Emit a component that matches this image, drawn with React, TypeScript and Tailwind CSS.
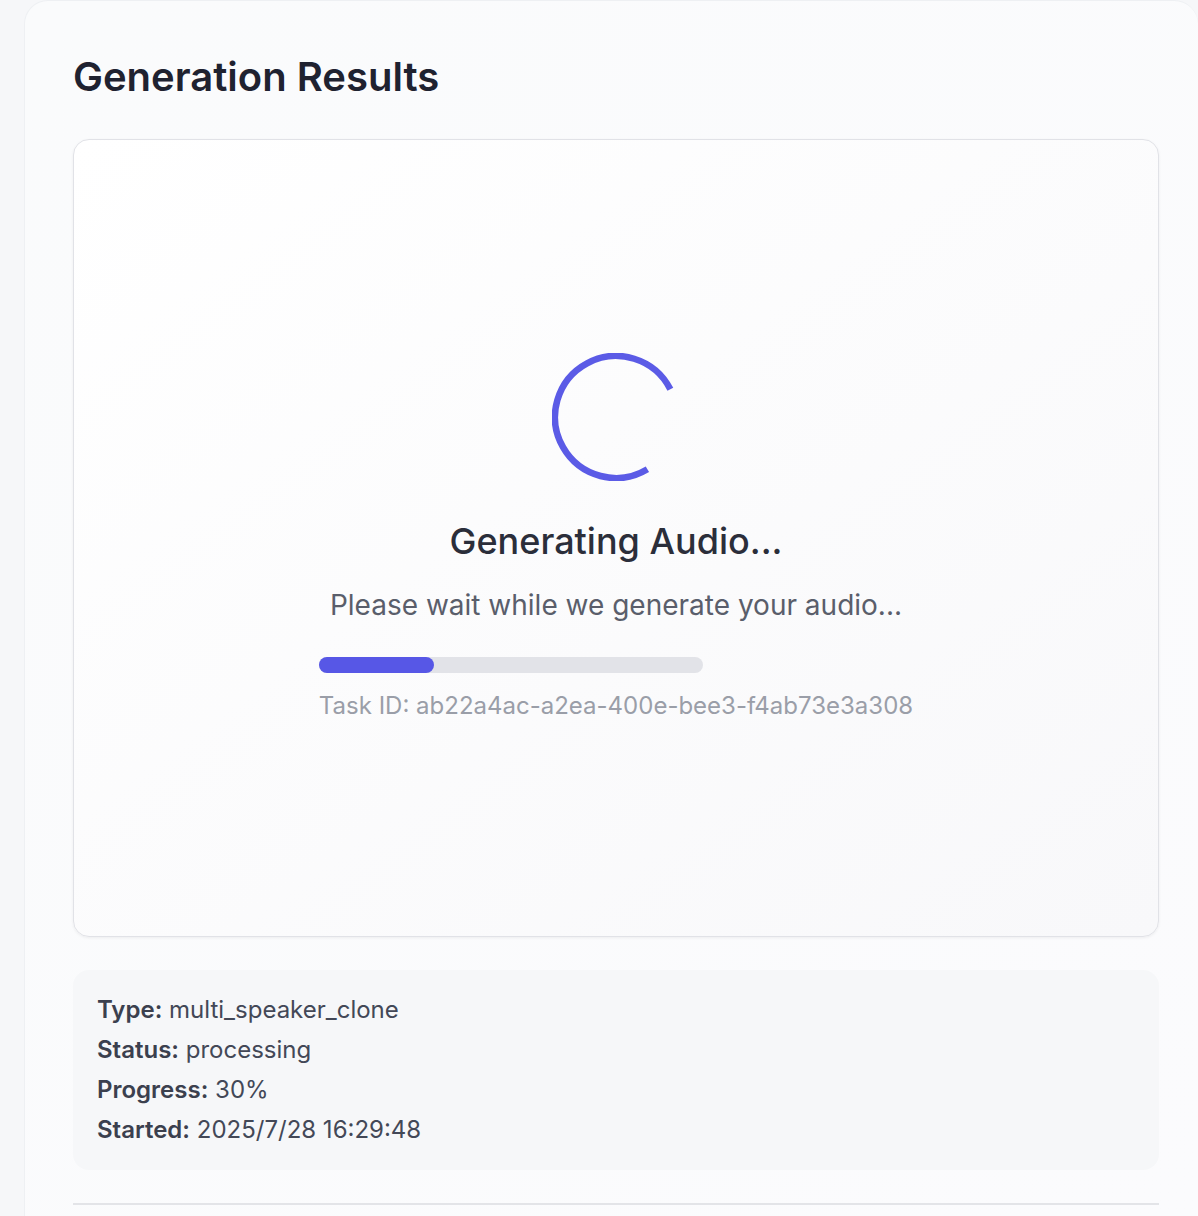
function Spinner() {
	return (
		<svg width="128" height="128" viewBox="0 0 128 128" fill="none">
			<path
				d="M118.35 36.3 A61 61 0 1 0 95.4 116.3"
				stroke="#5b5be6"
				strokeWidth="6.5"
			/>
		</svg>
	);
}

const info = [
	["Type:", "multi_speaker_clone"],
	["Status:", "processing"],
	["Progress:", "30%"],
	["Started:", "2025/7/28 16:29:48"],
];

function App() {
	return (
		<div className="min-h-[1216px] w-full overflow-hidden bg-[#f6f7f9] pl-6 font-['Inter',sans-serif]">
			<section
				className="
					min-h-[1216px] rounded-tl-3xl rounded-tr-3xl
					border-l border-t border-[#eef0f3]
					bg-gradient-to-br from-[#fafbfc] to-[#fbfbfd]
					pt-[52px] pl-[48px] pr-[39px]
				"
			>
				<h2 className="text-[40px] leading-[48px] font-semibold text-[#1f2230]">
					Generation Results
				</h2>

				<div
					className="
						mt-[38px] flex h-[798px] flex-col items-center justify-center pb-px
						rounded-2xl border border-[#e1e2e7]
						bg-gradient-to-br from-white to-[#f8f8fa]
						shadow-[0_1px_3px_rgba(0,0,0,0.06)]
					"
				>
					<Spinner />
					<h3 className="mt-10 text-[36px] leading-10 font-medium text-[#2b2e3a]">
						Generating Audio...
					</h3>
					<p className="mt-[26px] text-[28px] leading-9 text-[#5a5e6b]">
						Please wait while we generate your audio...
					</p>
					<div className="mt-[34px] flex flex-col items-start">
						<div className="h-4 w-96 rounded-full bg-[#e2e3e8]">
							<div className="h-4 w-[30%] rounded-full bg-[#5757e6]" />
						</div>
						<p className="mt-[17px] whitespace-nowrap text-2xl leading-8 text-[#9a9ea8]">
							Task ID: ab22a4ac-a2ea-400e-bee3-f4ab73e3a308
						</p>
					</div>
				</div>

				<div className="mt-[33px] rounded-2xl bg-[#f6f7f9] px-6 py-5">
					{info.map(([label, value]) => (
						<p key={label} className="text-2xl leading-10 text-[#434857]">
							<span className="font-semibold text-[#3b404e]">{label}</span> {value}
						</p>
					))}
				</div>

				<hr className="mt-[33px] border-t-2 border-[#e3e4e8]" />
			</section>
		</div>
	);
}

export default App;
